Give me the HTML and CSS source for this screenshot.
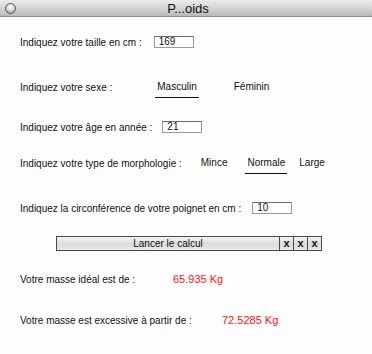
FILE: index.html
```html
<!DOCTYPE html>
<html lang="fr">
<head>
  <meta charset="UTF-8" />
  <title>P...oids</title>
  <link rel="stylesheet" href="styles.css">
</head>
<body>
  <div class="window">
    <div class="titlebar">
      <span class="close-dot"></span>
      <span class="title">P...oids</span>
    </div>

    <div class="form">
      <div class="row row-taille">
        <span class="label">Indiquez votre taille en cm :</span>
        <span class="field">169</span>
      </div>

      <div class="row row-sexe">
        <span class="label">Indiquez votre sexe :</span>
        <div class="choices">
          <span class="choice selected">Masculin</span>
          <span class="choice">Féminin</span>
        </div>
      </div>

      <div class="row row-age">
        <span class="label">Indiquez votre âge en année :</span>
        <span class="field">21</span>
      </div>

      <div class="row row-morpho">
        <span class="label">Indiquez votre type de morphologie :</span>
        <div class="choices">
          <span class="choice">Mince</span>
          <span class="choice selected">Normale</span>
          <span class="choice">Large</span>
        </div>
      </div>

      <div class="row row-poignet">
        <span class="label">Indiquez la circonférence de votre poignet en cm :</span>
        <span class="field">10</span>
      </div>

      <div class="buttons">
        <button class="btn-main">Lancer le calcul</button>
        <button class="btn-x">x</button>
        <button class="btn-x">x</button>
        <button class="btn-x">x</button>
      </div>

      <div class="row result result-ideal">
        <span class="label">Votre masse idéal est de :</span>
        <span class="value">65.935 Kg</span>
      </div>

      <div class="row result result-max">
        <span class="label">Votre masse est excessive à partir de :</span>
        <span class="value">72.5285 Kg</span>
      </div>
    </div>
  </div>
</body>
</html>
```

FILE: styles.css
```css
* {
  margin: 0;
  padding: 0;
  box-sizing: border-box;
}
body {
  background-color: #fdfdfd;
  font-family: 'Liberation Sans', Arial, sans-serif;
  font-size: 10px;
  color: #111;
}
.window {
  width: 372px;
  height: 354px;
  overflow: hidden;
}
.titlebar {
  height: 17px;
  display: flex;
  align-items: center;
  justify-content: center;
  position: relative;
  background: linear-gradient(#ececec, #d4d4d4 50%, #b8b8b8);
  border-bottom: 1px solid #8c8c8c;
}
.close-dot {
  position: absolute;
  left: 5px;
  top: 3px;
  width: 11px;
  height: 11px;
  border-radius: 50%;
  border: 1px solid #555;
  background: radial-gradient(circle at 50% 35%, #fff, #d8d8d8 45%, #8a8a8a);
}
.title {
  font-size: 13px;
  color: #111;
  margin-left: 4px;
}
.form {
  padding-left: 20px;
}
.row {
  display: flex;
  align-items: center;
  height: 14px;
}
.field {
  width: 40px;
  height: 12px;
  line-height: 10px;
  padding-left: 4px;
  background: #fff;
  border: 1px solid #9a9a9a;
  border-top-color: #6a6a6a;
  font-size: 10px;
}
.choices {
  display: flex;
  align-items: center;
}
.choice {
  padding: 0 2px 5px;
  margin-top: 5px;
  border-bottom: 1px solid transparent;
}
.choice.selected {
  border-bottom-color: #111;
}
.row-taille {
  margin-top: 18px;
  gap: 12px;
}
.row-sexe {
  margin-top: 31px;
  gap: 43px;
}
.row-sexe .choices {
  gap: 33px;
}
.row-age {
  margin-top: 26px;
  gap: 10px;
}
.row-morpho {
  margin-top: 22px;
  gap: 17px;
}
.row-morpho .choices {
  gap: 16px;
}
.row-morpho .choices .choice:last-child {
  margin-left: -6px;
}
.row-poignet {
  margin-top: 31px;
  gap: 11px;
}
.buttons {
  display: flex;
  margin-top: 21px;
  margin-left: 36px;
  height: 15px;
  border: 1px solid #4a4a4a;
  width: 266px;
}
.buttons button {
  font-family: 'Liberation Sans', Arial, sans-serif;
  font-size: 10px;
  color: #111;
  border: none;
  background: linear-gradient(#f4f4f4, #dcdcdc 50%, #e8e8e8);
  height: 13px;
  line-height: 13px;
}
.btn-main {
  flex: 1;
}
.btn-x {
  width: 14px;
  border-left: 1px solid #4a4a4a !important;
  font-weight: bold;
  font-size: 11px !important;
}
.result .value {
  color: #ff1010;
  font-size: 11px;
}
.result-ideal {
  margin-top: 21px;
}
.result-ideal .label {
  width: 153px;
}
.result-max {
  margin-top: 27px;
}
.result-max .label {
  width: 202px;
}
```
